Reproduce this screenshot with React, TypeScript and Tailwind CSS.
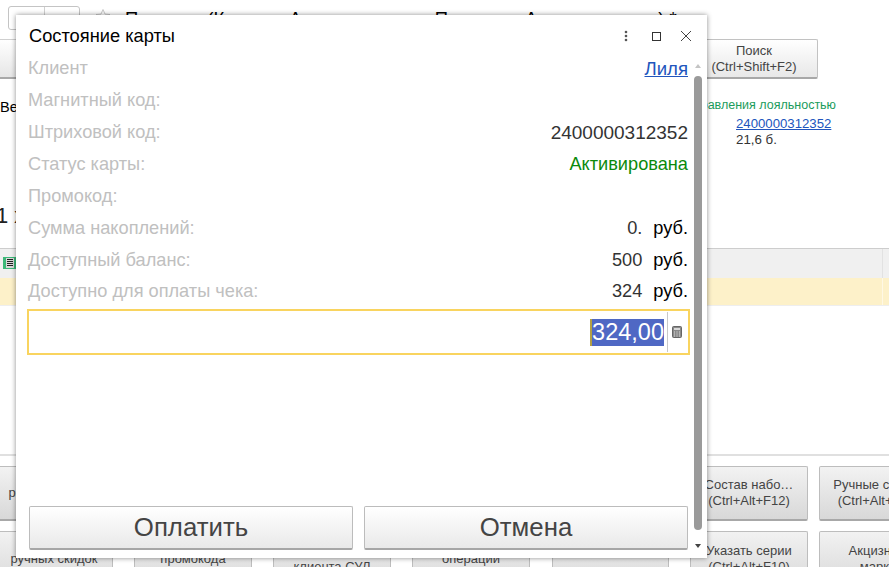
const font = "[font-family:'Liberation_Sans',Arial,sans-serif]";

function BgButton({ w, text, lines = [], className = "" }: { w: string; text?: string; lines?: string[]; className?: string }) {
  const all = text ? [text] : lines;
  return (
    <div className={`${w} ${className} h-full shrink-0 flex flex-col items-center justify-center rounded-[2px] border border-[#bdbdbd] border-b-2 border-b-[#a8a8a8] bg-gradient-to-b from-[#f2f2f2] to-[#d8d8d8] text-[13px] leading-[16px] text-[#444] whitespace-nowrap overflow-hidden`}>
      {all.map((l, i) => (
        <span key={i}>{l}</span>
      ))}
    </div>
  );
}

function Row({ label, value, unit, color = "text-[#333]", big = false }: { label: string; value?: string; unit?: string; color?: string; big?: boolean }) {
  return (
    <div className="h-[32px] flex items-center justify-between text-[18.2px]">
      <span className="text-[#c0c0c0]">{label}</span>
      {value && (
        <span className={`${color} ${big ? "text-[19px]" : ""} flex`}>
          <span>{value}</span>
          {unit && <span className="ml-[11px] text-black">{unit}</span>}
        </span>
      )}
    </div>
  );
}

function Background() {
  return (
    <div className="flex flex-col h-full">
      <div className="h-[39px] flex items-start shrink-0">
        <div className="ml-[8px] mt-[6px] w-[72px] h-[24px] border border-[#c4c4c4] rounded-[3px] flex">
          <div className="w-[36px] border-r border-[#d0d0d0]" />
        </div>
        <svg className="ml-[15px] mt-[8px]" width="16" height="16" viewBox="0 0 16 16" fill="none">
          <path d="M8 1.5l2 4.6 5 .4-3.8 3.3 1.2 4.9L8 12.1l-4.4 2.6 1.2-4.9L1 6.5l5-.4z" stroke="#c8c8c8" strokeWidth="1" />
        </svg>
        <span className="ml-[14px] mt-[8px] text-[18.5px] leading-[22px] text-black whitespace-nowrap">
          Продажа (Кассира Александровска Продавец Александровна) *
        </span>
      </div>
      <div className="h-[40px] shrink-0 flex justify-between">
        <div className="w-[60px] border-t border-t-[#cfcfcf] border-b-2 border-b-[#a9a9a9] bg-gradient-to-b from-white to-[#e6e6e6]" />
        <div className="mr-[71px] w-[128px] flex flex-col items-center justify-center rounded-[2px] border border-[#c2c2c2] border-b-2 border-b-[#a8a8a8] bg-gradient-to-b from-white to-[#e8e8e8] text-[13px] leading-[16px] text-[#444]">
          <span>Поиск</span>
          <span>(Ctrl+Shift+F2)</span>
        </div>
      </div>
      <div className="h-[100px] shrink-0 flex justify-between pt-[18px]">
        <span className="text-[14.5px] leading-[20px] text-black">Вес</span>
        <div className="mr-[53px] w-[200px] flex flex-col items-end">
          <span className="text-[12.5px] leading-[17px] text-[#1a9c5c] whitespace-nowrap">Инструменты управления лояльностью</span>
          <span className="self-start ml-[100px] mt-[2px] text-[13.2px] leading-[16px] text-[#2155bd] underline">2400000312352</span>
          <span className="self-start ml-[100px] text-[13.3px] leading-[15px] text-[#333]">21,6 б.</span>
        </div>
      </div>
      <div className="h-[69px] shrink-0 pt-[24px] -ml-[4px] text-[22px] leading-[26px] text-[#222]">1 x</div>
      <div className="h-[30px] shrink-0 border-t-[1.5px] border-[#cdcdcd] bg-[#f0f0f0] flex items-center justify-between pl-[3px]">
        <svg width="13" height="12" viewBox="0 0 13 12" className="-mt-[1px]">
          <rect width="13" height="12" fill="#3cb878" />
          <rect x="3" y="1" width="8" height="10" fill="#d9d9d9" />
          <path d="M4 2.5h6M4 4.5h6M4 6.5h6M4 8.5h6" stroke="#222" strokeWidth="1.2" />
        </svg>
        <div className="w-[7px] h-full border-l border-[#e2e2e2]" />
      </div>
      <div className="h-[28px] shrink-0 bg-[#fdf1c9] border-b border-[#eeeeee] flex justify-end">
        <div className="w-[7px] h-full border-l border-[#fff8e4]" />
      </div>
      <div className="flex-1 border-b-2 border-[#e0e0e0]" />
      <div className="h-[55px] mt-[10px] shrink-0 flex -ml-[5px]">
        <BgButton w="w-[118px]" text="расчета скидок" />
        <BgButton w="w-[118px]" className="ml-[21px]" />
        <BgButton w="w-[118px]" className="ml-[21px]" />
        <BgButton w="w-[118px]" className="ml-[21px]" />
        <BgButton w="w-[117px]" className="ml-[22px]" />
        <BgButton w="w-[118px]" className="ml-[21px]" lines={["Состав набо…", "(Ctrl+Alt+F12)"]} />
        <BgButton w="w-[118px]" className="ml-[11px]" lines={["Ручные скидки", "(Ctrl+Alt+F11)"]} />
      </div>
      <div className="h-[57px] mt-[10px] shrink-0 flex -ml-[5px] -mb-[21px]">
        <BgButton w="w-[118px]" text="ручных скидок" />
        <BgButton w="w-[118px]" className="ml-[21px]" text="промокода" />
        <BgButton w="w-[118px]" className="ml-[21px] pt-[16px]" text="клиента СУЛ" />
        <BgButton w="w-[118px]" className="ml-[21px]" text="операции" />
        <BgButton w="w-[117px]" className="ml-[22px]" />
        <BgButton w="w-[118px]" className="ml-[21px]" lines={["Указать серии", "(Ctrl+Alt+F10)"]} />
        <BgButton w="w-[118px]" className="ml-[11px]" lines={["Акцизные", "марки"]} />
      </div>
    </div>
  );
}

function Modal() {
  return (
    <div className="absolute left-[16px] top-[15px] w-[691px] h-[543px] bg-white shadow-[0_0_5px_rgba(0,0,0,0.45)] flex flex-col">
      <div className="h-[38px] shrink-0 flex items-center pl-[13px] pt-[4px]">
        <span className="flex-1 text-[18.25px] text-black">Состояние карты</span>
        <svg width="4" height="12" viewBox="0 0 4 12" className="mr-[24px]">
          <circle cx="2" cy="2" r="1.3" fill="#555" />
          <circle cx="2" cy="6" r="1.3" fill="#555" />
          <circle cx="2" cy="10" r="1.3" fill="#555" />
        </svg>
        <div className="w-[9px] h-[9px] border-[1.5px] border-[#333] mr-[19px]" />
        <svg width="12" height="12" viewBox="0 0 12 12" className="mr-[15px]">
          <path d="M1 1l10 10M11 1L1 11" stroke="#444" strokeWidth="1" />
        </svg>
      </div>
      <div className="flex-1 flex min-h-0">
        <div className="flex-1 flex flex-col pl-[12px] pr-[3px] min-w-0">
          <div>
            <div className="h-[32px] flex items-center justify-between text-[18.2px]">
              <span className="text-[#c0c0c0]">Клиент</span>
              <span className="text-[18.6px] text-[#2155bd] underline">Лиля</span>
            </div>
            <Row label="Магнитный код:" />
            <Row label="Штриховой код:" value="2400000312352" big />
            <Row label="Статус карты:" value="Активирована" color="text-[#0b8a0b]" />
            <Row label="Промокод:" />
            <Row label="Сумма накоплений:" value="0." unit="руб." />
            <Row label="Доступный баланс:" value="500" unit="руб." />
            <div className="-mt-[1px]">
              <Row label="Доступно для оплаты чека:" value="324" unit="руб." />
            </div>
          </div>
          <div className="-ml-[1px] -mr-[2px] mt-[1px] h-[46px] shrink-0 border-2 border-[#f9d45f] flex items-center justify-end">
            <span className="text-[23.5px] leading-[27px] bg-[#4f68c4] text-white border-l-2 border-[#b3a045]">324,00</span>
            <div className="ml-[3px] w-[1px] h-[40px] bg-[#c8c8c8]" />
            <svg width="10" height="12" viewBox="0 0 10 12" className="ml-[4px] mr-[6px]">
              <rect x="0.5" y="0.5" width="9" height="11" rx="1" fill="#8a8a8a" stroke="#666" />
              <rect x="2" y="2" width="6" height="2" fill="#d8d8d8" />
              <path d="M2 6h1M4.5 6h1M7 6h1M2 8h1M4.5 8h1M7 8h1M2 10h1M4.5 10h1M7 10h1" stroke="#dedede" strokeWidth="1" />
            </svg>
          </div>
          <div className="flex-1" />
          <div className="flex gap-[11px] ml-[1px] pb-[8px] shrink-0">
            <button className="flex-1 h-[44px] rounded-[2px] border border-[#bcbcbc] border-b-2 border-b-[#a6a6a6] bg-gradient-to-b from-white to-[#e9e9e9] text-[25.8px] text-[#444]">Оплатить</button>
            <button className="flex-1 h-[44px] rounded-[2px] border border-[#bcbcbc] border-b-2 border-b-[#a6a6a6] bg-gradient-to-b from-white to-[#e9e9e9] text-[25.8px] text-[#444]">Отмена</button>
          </div>
        </div>
        <div className="w-[13px] shrink-0 mr-[3px] flex flex-col items-center">
          <svg width="6" height="4" viewBox="0 0 6 4" className="mt-[11px]"><path d="M3 0l3 4H0z" fill="#c4c4c4" /></svg>
          <div className="mt-[8px] w-[8px] h-[454px] rounded-[4px] bg-[#9a9a9a]" />
          <svg width="6" height="4" viewBox="0 0 6 4" className="mt-[14px]"><path d="M3 4l3-4H0z" fill="#444" /></svg>
        </div>
      </div>
    </div>
  );
}

export default function App() {
  return (
    <div className={`${font} relative w-[889px] h-[567px] overflow-hidden bg-white`}>
      <Background />
      <Modal />
    </div>
  );
}
